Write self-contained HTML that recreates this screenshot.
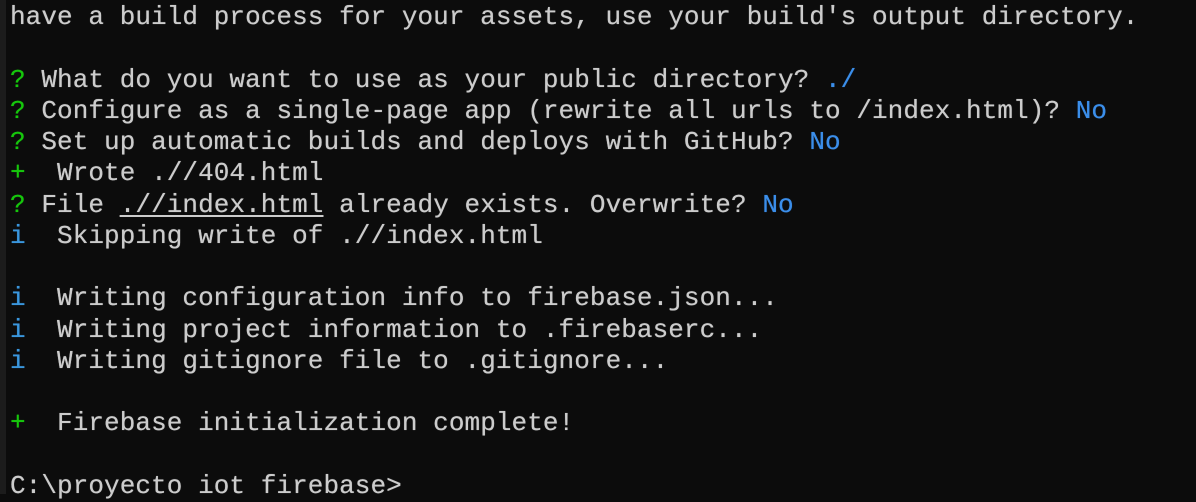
<!DOCTYPE html>
<html><head><style>
html,body{margin:0;padding:0;background:#0c0c0c;width:1196px;height:494px;overflow:hidden}
.t{position:absolute;left:10px;top:2px;font-family:"Liberation Mono",monospace;font-size:26px;line-height:31.25px;color:#cccccc;white-space:pre;letter-spacing:0.07px;text-shadow:0 0 0.6px currentColor}
.bar{position:absolute;left:0;top:0;width:6px;height:494px;background:#1c1c1c}
.g{color:#16c60c}.c{color:#3a96dd}.b{color:#3b8eea}
u{text-decoration:underline;text-underline-offset:3px}
</style></head><body>
<div class="bar"></div>
<div class="t">have a build process for your assets, use your build's output directory.

<span class="g">?</span> What do you want to use as your public directory? <span class="b">./</span>
<span class="g">?</span> Configure as a single-page app (rewrite all urls to /index.html)? <span class="b">No</span>
<span class="g">?</span> Set up automatic builds and deploys with GitHub? <span class="b">No</span>
<span class="g">+</span>  Wrote .//404.html
<span class="g">?</span> File <u>.//index.html</u> already exists. Overwrite? <span class="b">No</span>
<span class="c">i</span>  Skipping write of .//index.html

<span class="c">i</span>  Writing configuration info to firebase.json...
<span class="c">i</span>  Writing project information to .firebaserc...
<span class="c">i</span>  Writing gitignore file to .gitignore...

<span class="g">+</span>  Firebase initialization complete!

C:\proyecto iot firebase&gt;</div>
</body></html>
